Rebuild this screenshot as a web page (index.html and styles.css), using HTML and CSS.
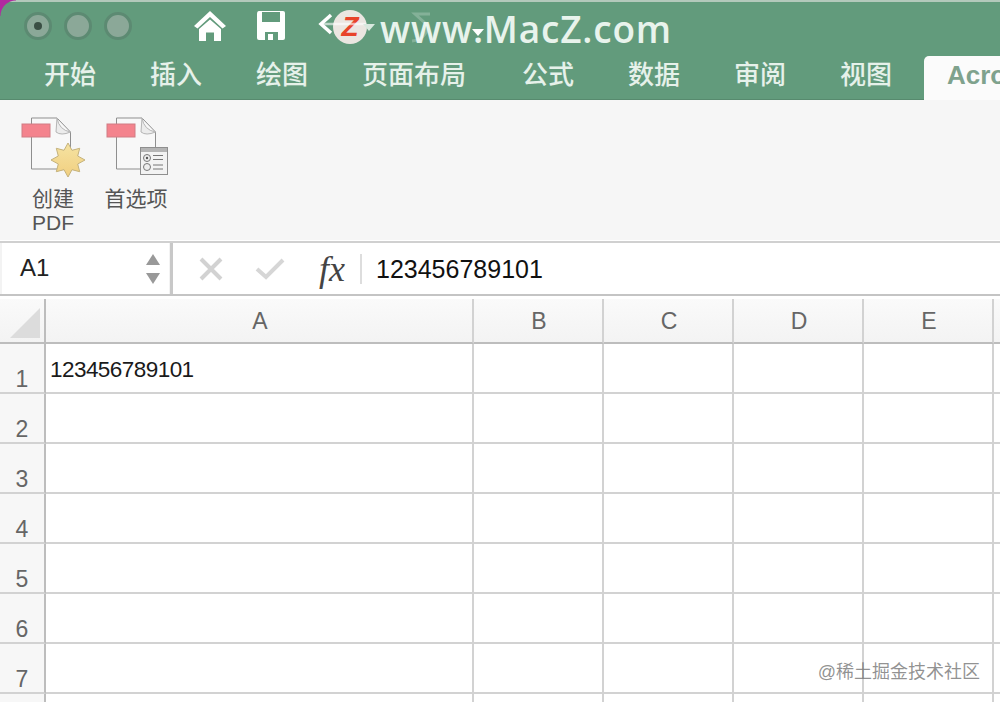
FILE: index.html
```html
<!DOCTYPE html>
<html lang="zh">
<head>
<meta charset="utf-8">
<title>Excel</title>
<link rel="stylesheet" href="styles.css">
</head>
<body>
<div class="app">
  <header class="top">
    <div class="corner"></div>
    <div class="titlebar">
      <div class="lights">
        <span class="light"><i class="dot"></i></span>
        <span class="light"></span>
        <span class="light"></span>
      </div>
      <div class="quick">
        <svg class="ic-home" width="34" height="32" viewBox="0 0 34 32"><path d="M17 1 L33 16 L29.500 18.500 L17 7 L4.500 18.500 L1 16 Z" fill="#fff"/><path d="M6 19 L17 9.500 L28 19 L28 31 L21 31 L21 22.500 L13 22.500 L13 31 L6 31 Z" fill="#fff"/></svg>
        <svg class="ic-save" width="30" height="30" viewBox="0 0 30 30"><path d="M3 0 H27 Q29 0 29 2 V27 Q29 29 27 29 H3 Q1 29 1 27 V3 Q1 0 3 0 Z" fill="#fff"/><rect x="6" y="1" width="18" height="10" fill="#629b7c"/><rect x="9" y="21" width="13" height="8" fill="#629b7c"/><rect x="12" y="23" width="5" height="6" fill="#fff"/></svg>
      </div>
    </div>
    <nav class="tabs">
      <span class="tab t1">开始</span>
      <span class="tab t2">插入</span>
      <span class="tab t3">绘图</span>
      <span class="tab t4">页面布局</span>
      <span class="tab t5">公式</span>
      <span class="tab t6">数据</span>
      <span class="tab t7">审阅</span>
      <span class="tab t8">视图</span>
      <span class="tab active">Acro</span>
    </nav>
    <div class="mark">
      <span class="zlogo">Z</span>
      <span class="marktext">www.MacZ.com</span>
    </div>
    <svg class="ov-undo" width="50" height="22" viewBox="0 0 50 22"><path d="M13 2 L3 11 L13 20" fill="none" stroke="#fff" stroke-width="3.500"/><path d="M4 11 H48" stroke="#fff" stroke-width="2.500" opacity="0.6"/></svg>
    <i class="caret c1"></i>
    <i class="caret c2"></i>
    <svg class="ov-redo" width="22" height="32" viewBox="0 0 22 32"><path d="M20 2 H5 L16 12 C20 20 12 28 2 29" fill="none" stroke="#fff" stroke-width="3" opacity="0.22"/></svg>
  </header>

  <section class="ribbon">
    <div class="rbtn first">
      <svg width="64" height="60" viewBox="0 0 64 60">
        <defs><linearGradient id="star" x1="0" y1="0" x2="0" y2="1"><stop offset="0" stop-color="#f5e3a2"/><stop offset="1" stop-color="#f1cf80"/></linearGradient></defs>
        <path d="M10.500 1 H36 L49.500 15 V52 H10.500 Z" fill="#f8f8f8" stroke="#8f8f8f" stroke-width="1"/>
        <path d="M36 1 Q38 13 49.500 15 Q40 19 35 15 Z" fill="#ececec" stroke="#b5b5b5" stroke-width="1"/>
        <rect x="1" y="7" width="28" height="13" fill="#f4838d" stroke="#d07c84" stroke-width="1"/>
        <path d="M47 26 L51 33.300 L58.700 31.300 L56.700 39 L64 43 L56.700 47 L58.700 54.700 L51 52.700 L47 60 L43 52.700 L35.300 54.700 L37.300 47 L30 43 L37.300 39 L35.300 31.300 L43 33.300 Z" fill="url(#star)" stroke="#c4b27c" stroke-width="1"/>
      </svg>
      <span class="rlabel">创建<br>PDF</span>
    </div>
    <div class="rbtn second">
      <svg width="64" height="60" viewBox="0 0 64 60">
        <path d="M10.500 1 H36 L49.500 15 V52 H10.500 Z" fill="#f8f8f8" stroke="#8f8f8f" stroke-width="1"/>
        <path d="M36 1 Q38 13 49.500 15 Q40 19 35 15 Z" fill="#ececec" stroke="#b5b5b5" stroke-width="1"/>
        <rect x="1" y="7" width="28" height="13" fill="#f4838d" stroke="#d07c84" stroke-width="1"/>
        <rect x="34.500" y="30.500" width="27" height="27" fill="#f3f3f3" stroke="#8f8f8f" stroke-width="1"/>
        <rect x="35" y="31" width="26" height="4" fill="#b5b5b5"/>
        <circle cx="41" cy="41" r="3.500" fill="#eee" stroke="#777"/><circle cx="41" cy="41" r="1.200" fill="#555"/>
        <circle cx="41" cy="50" r="3.500" fill="#eee" stroke="#777"/>
        <path d="M47 38.500 H57 M47 42.500 H57 M47 48 H57 M47 52 H57" stroke="#777" stroke-width="1"/>
      </svg>
      <span class="rlabel">首选项</span>
    </div>
  </section>

  <section class="fbar">
    <div class="namebox">
      <span class="name">A1</span>
      <span class="stepper"><i class="up"></i><i class="down"></i></span>
    </div>
    <div class="formula">
      <svg class="ic-x" width="24" height="24" viewBox="0 0 24 24"><path d="M2 2 L22 22 M22 2 L2 22" stroke="#d2d2d2" stroke-width="4"/></svg>
      <svg class="ic-ok" width="30" height="24" viewBox="0 0 30 24"><path d="M2 12 L11 20 L28 3" fill="none" stroke="#d6d6d6" stroke-width="4"/></svg>
      <span class="fx">fx</span>
      <span class="fsep"></span>
      <span class="ftext">123456789101</span>
    </div>
  </section>

  <section class="sheet">
    <div class="cell head corner-cell"><i class="tri"></i></div>
    <div class="cell head">A</div><div class="cell head">B</div><div class="cell head">C</div><div class="cell head">D</div><div class="cell head">E</div><div class="cell head"></div>

    <div class="cell rowh">1</div><div class="cell val">123456789101</div><div class="cell"></div><div class="cell"></div><div class="cell"></div><div class="cell"></div><div class="cell"></div>
    <div class="cell rowh">2</div><div class="cell"></div><div class="cell"></div><div class="cell"></div><div class="cell"></div><div class="cell"></div><div class="cell"></div>
    <div class="cell rowh">3</div><div class="cell"></div><div class="cell"></div><div class="cell"></div><div class="cell"></div><div class="cell"></div><div class="cell"></div>
    <div class="cell rowh">4</div><div class="cell"></div><div class="cell"></div><div class="cell"></div><div class="cell"></div><div class="cell"></div><div class="cell"></div>
    <div class="cell rowh">5</div><div class="cell"></div><div class="cell"></div><div class="cell"></div><div class="cell"></div><div class="cell"></div><div class="cell"></div>
    <div class="cell rowh">6</div><div class="cell"></div><div class="cell"></div><div class="cell"></div><div class="cell"></div><div class="cell"></div><div class="cell"></div>
    <div class="cell rowh">7</div><div class="cell"></div><div class="cell"></div><div class="cell"></div><div class="cell"></div><div class="cell"></div><div class="cell"></div>
    <div class="cell rowh"></div><div class="cell"></div><div class="cell"></div><div class="cell"></div><div class="cell"></div><div class="cell"></div><div class="cell"></div>
  </section>
  <div class="watermark">@稀土掘金技术社区</div>
</div>
</body>
</html>
```
FILE: styles.css
```css
* { box-sizing: border-box; }
html, body { margin: 0; height: 100%; overflow: hidden; }
body { background: #fff; font-family: "Liberation Sans", "Noto Sans CJK SC", sans-serif; }
.app { position: relative; width: 1000px; height: 702px; overflow: hidden; }

.top { position: relative; height: 100px; background: #629b7c; border-top: 2px solid #b3c9bb; border-bottom: 1px solid #578a6e; }
.corner { position: absolute; left: 0; top: -2px; width: 16px; height: 16px; background: radial-gradient(circle at 100% 100%, transparent 15px, #b02aa0 16px); }
.titlebar { height: 48px; display: flex; align-items: center; }
.lights { display: flex; gap: 12px; margin-left: 24px; }
.light { width: 28px; height: 28px; border-radius: 50%; background: #8ba898; border: 3px solid #5c8a72; display: flex; align-items: center; justify-content: center; }
.dot { width: 8px; height: 8px; border-radius: 50%; background: #3a4f44; }
.quick { display: flex; align-items: center; margin-left: 61px; }
.ic-save { margin-left: 29px; }

.tabs { position: relative; display: flex; height: 50px; font-size: 26px; font-weight: 500; color: #e6f1ea; }
.tab { position: absolute; top: 8px; line-height: 34px; white-space: nowrap; }
.t1 { left: 44px; } .t2 { left: 150px; } .t3 { left: 256px; } .t4 { left: 362px; }
.t5 { left: 522px; } .t6 { left: 628px; } .t7 { left: 734px; } .t8 { left: 840px; }
.tab.active { left: 924px; top: 6px; width: 90px; height: 44px; padding: 1px 0 0 23px; background: #fbfbfb; border-radius: 5px 5px 0 0; color: #7fa28d; font-weight: 700; line-height: 36px; font-family: "Liberation Sans", sans-serif; font-size: 26px; }

.mark { position: absolute; left: 333px; top: 7px; display: flex; align-items: center; height: 36px; }
.zlogo { width: 34px; height: 34px; border-radius: 50%; background: #ebe6e1; color: #e8432a; font-size: 28px; font-weight: 700; font-style: italic; text-align: center; line-height: 34px; }
.marktext { margin-left: 13px; margin-top: 4px; font-family: "Open Sans", sans-serif; font-weight: 600; font-size: 37px; color: #e8f3ec; line-height: 36px; letter-spacing: 0.800px; white-space: nowrap; }
.ov-undo { position: absolute; left: 318px; top: 11px; }
.ov-redo { position: absolute; left: 410px; top: 10px; }
.caret { position: absolute; width: 0; height: 0; border: 6px solid transparent; border-bottom: 0; border-top: 7px solid #d8e8de; }
.c1 { left: 363px; top: 22px; }
.c2 { left: 472px; top: 27px; border-top-color: #fff; }

.ribbon { position: relative; height: 140px; background: #f6f6f6; }
.rbtn { position: absolute; top: 17px; display: flex; flex-direction: column; align-items: center; }
.rbtn svg { display: block; }
.first { left: 21px; width: 64px; }
.second { left: 104px; width: 64px; }
.second svg { margin-left: 4px; }
.rlabel { margin-top: 10px; font-size: 21px; line-height: 24px; color: #555; text-align: center; white-space: nowrap; }

.fbar { display: flex; height: 55px; margin-top: 1px; background: #f3f3f3; border-top: 2px solid #d0d0d0; border-bottom: 2px solid #c4c4c4; margin-bottom: 3px; }
.namebox { width: 167px; margin-left: 2px; background: #fff; display: flex; align-items: center; justify-content: space-between; padding: 0 9px 0 18px; }
.name { font-size: 24px; color: #222; margin-bottom: 2px; }
.stepper { display: flex; flex-direction: column; gap: 8px; }
.up { display: block; width: 0; height: 0; border: 7px solid transparent; border-top: 0; border-bottom: 11px solid #999; }
.down { display: block; width: 0; height: 0; border: 7px solid transparent; border-bottom: 0; border-top: 11px solid #999; }
.formula { flex: 1; margin-left: 1px; border-left: 3px solid #c8c8c8; background: #fff; display: flex; align-items: center; padding-left: 26px; }
.ic-ok { margin-left: 32px; }
.fx { margin-left: 34px; width: 29px; font-family: "Liberation Serif", serif; font-style: italic; font-size: 36px; color: #444; line-height: 40px; }
.fsep { width: 2px; height: 30px; background: #ddd; margin-left: 12px; }
.ftext { margin-left: 14px; margin-top: 2px; font-size: 25px; color: #111; }

.sheet { display: grid; grid-template-columns: 46px 428px 130px 130px 130px 130px 130px; grid-template-rows: 45px repeat(8, 50px); background: #fff; }
.cell { border-right: 2px solid #d2d2d2; border-bottom: 2px solid #d2d2d2; min-width: 0; }
.head { background: linear-gradient(#fafafa, #f3f3f3); border-bottom-color: #bdbdbd; display: flex; align-items: center; justify-content: center; font-size: 23px; color: #666; padding: 2px 0 0 2px; }
.corner-cell { position: relative; border-right-color: #bdbdbd; }
.tri { position: absolute; right: 4px; bottom: 4px; width: 0; height: 0; border-left: 30px solid transparent; border-bottom: 30px solid #dcdcdc; }
.rowh { background: #f7f7f7; border-right-color: #bdbdbd; display: flex; align-items: flex-end; justify-content: center; font-size: 23px; color: #666; padding-bottom: 1px; line-height: 24px; }
.val { font-size: 22.500px; color: #1a1a1a; padding: 12px 0 0 4px; letter-spacing: -0.550px; white-space: nowrap; line-height: 28px; }

.watermark { position: absolute; right: 20px; top: 660px; font-size: 18px; line-height: 24px; color: rgba(110,110,110,0.75); white-space: nowrap; }
```
